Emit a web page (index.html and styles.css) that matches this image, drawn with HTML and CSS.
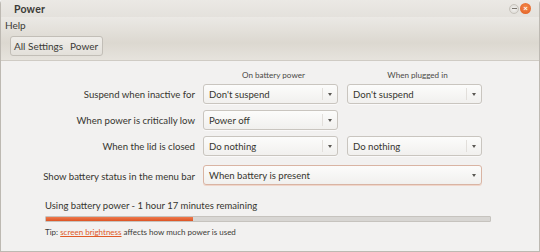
FILE: index.html
```html
<!DOCTYPE html>
<html>
<head>
<meta charset="utf-8">
<link rel="stylesheet" href="styles.css">
</head>
<body>
<div class="window">
  <div class="titlebar">
    <span class="title">Power</span>
    <div class="controls">
      <span class="btn-min"><span></span></span>
      <span class="btn-close">×</span>
    </div>
  </div>
  <div class="chrome">
    <div class="menubar"><span>Help</span></div>
    <div class="toolbar">
      <div class="crumbs"><span>All Settings</span><span>Power</span></div>
    </div>
  </div>
  <div class="content">
    <div class="grid">
      <div></div>
      <div class="colhead">On battery power</div>
      <div class="colhead">When plugged in</div>

      <div class="label">Suspend when inactive for</div>
      <div class="combo"><span>Don't suspend</span><i></i></div>
      <div class="combo"><span>Don't suspend</span><i></i></div>

      <div class="label">When power is critically low</div>
      <div class="combo"><span>Power off</span><i></i></div>
      <div></div>

      <div class="label">When the lid is closed</div>
      <div class="combo"><span>Do nothing</span><i></i></div>
      <div class="combo"><span>Do nothing</span><i></i></div>

      <div class="label last">Show battery status in the menu bar</div>
      <div class="combo wide last focus"><span>When battery is present</span><i></i></div>
    </div>
    <div class="status">
      <div class="using">Using battery power - 1 hour 17 minutes remaining</div>
      <div class="bar"><div class="fill" style="width:33%"></div></div>
      <div class="tip">Tip: <a>screen brightness</a> affects how much power is used</div>
    </div>
  </div>
</div>
</body>
</html>
```
FILE: styles.css
```css
* { box-sizing: border-box; }
html, body { margin: 0; padding: 0; }
body {
  width: 540px; height: 252px; overflow: hidden;
  font-family: Lato, "Noto Sans", sans-serif;
  font-size: 9.6px; color: #3c3c3c;
  background: #f2f1f0;
}
.window {
  width: 540px; height: 252px;
  border: 1px solid #bdb9b2;
  border-top: none;
  border-radius: 4px 4px 0 0;
  display: flex; flex-direction: column;
  background: #f2f1f0;
}
.titlebar {
  height: 17px;
  background: linear-gradient(#ebe9e5, #e4e1dc);
  display: flex; align-items: center; justify-content: space-between;
  padding: 0 8px 0 13px;
}
.title { font-weight: bold; font-size: 10.5px; color: #3c3b37; letter-spacing: 0.2px; }
.controls { display: flex; align-items: center; gap: 1px; }
.btn-min {
  width: 10px; height: 10px; border-radius: 50%;
  background: radial-gradient(#f4f3f1, #d8d5cf);
  border: 1px solid #c7c3bc;
  display: flex; align-items: center; justify-content: center;
}
.btn-min span { width: 5px; height: 1px; background: #7a766f; }
.btn-close {
  width: 11px; height: 11px; border-radius: 50%;
  background: radial-gradient(circle at 50% 40%, #f58a4b, #df5a1f);
  color: #fff; font-size: 8px; line-height: 11px; text-align: center;
  font-weight: bold;
}
.chrome {
  background: linear-gradient(#ebe9e5 0%, #dcd8d0 60%, #e6e3dd 100%);
  border-bottom: 1px solid #cfcbc4;
}
.menubar { height: 15px; padding: 0 0 0 4px; display: flex; align-items: center; color: #3c3b37; font-size: 10px; }
.toolbar { height: 28px; padding: 4px 9px 0 9px; }
.crumbs {
  display: inline-flex; height: 20px; align-items: center;
  border: 1px solid #c2beb7; border-radius: 3px;
  background: linear-gradient(#efede9, #e3e0da);
  padding: 0 4px 0 3px;
  gap: 7px;
  color: #3c3b37;
  font-size: 10px;
}
.content { flex: 1; display: flex; flex-direction: column; }
.grid {
  display: grid;
  grid-template-columns: 1fr 135px 135px;
  column-gap: 9px;
  padding: 7px 57px 0 0;
  align-items: center;
}
.colhead { text-align: center; font-size: 8.1px; color: #4a4946; height: 14px; line-height: 14px; padding-left: 6px; margin-bottom: -1px; }
.label { text-align: right; color: #36352f; margin-right: -1px; }
.combo {
  height: 20px; margin: 3px 0;
  border: 1px solid #c9c5bf; border-radius: 3px;
  background: linear-gradient(#fcfcfb, #f1f0ee);
  display: flex; align-items: center; justify-content: space-between;
  padding: 0 0 0 5px;
  color: #36352f;
  box-shadow: 0 1px 0 rgba(255,255,255,0.6);
}
.combo i {
  width: 15px; height: 12px;
  border-left: 1px solid #e2dfdb;
  position: relative;
}
.combo i::after {
  content: ""; position: absolute; left: 5px; top: 5px;
  border-left: 2.5px solid transparent; border-right: 2.5px solid transparent;
  border-top: 3px solid #5a5853;
}
.combo.wide { grid-column: 2 / 4; }
.combo.wide i { border-left-color: transparent; }
.combo.focus { border-color: #d9b4a3; box-shadow: 0 1px 0 #f0d6ca; }
.combo.last, .label.last { margin-top: 6px; }
.status { padding: 11px 0 0 44px; }
.using { font-size: 9.5px; color: #36352f; line-height: 14px; }
.bar {
  width: 446px; height: 6px; margin-top: 3px;
  background: #d8d6d3; border: 1px solid #c6c3be; border-radius: 1px;
  overflow: hidden;
}
.fill { height: 100%; background: linear-gradient(#ee7a4d, #dd5424); }
.tip { font-size: 8px; margin-top: 5px; color: #3c3b37; }
.tip a { color: #e05a27; text-decoration: underline; }
```
